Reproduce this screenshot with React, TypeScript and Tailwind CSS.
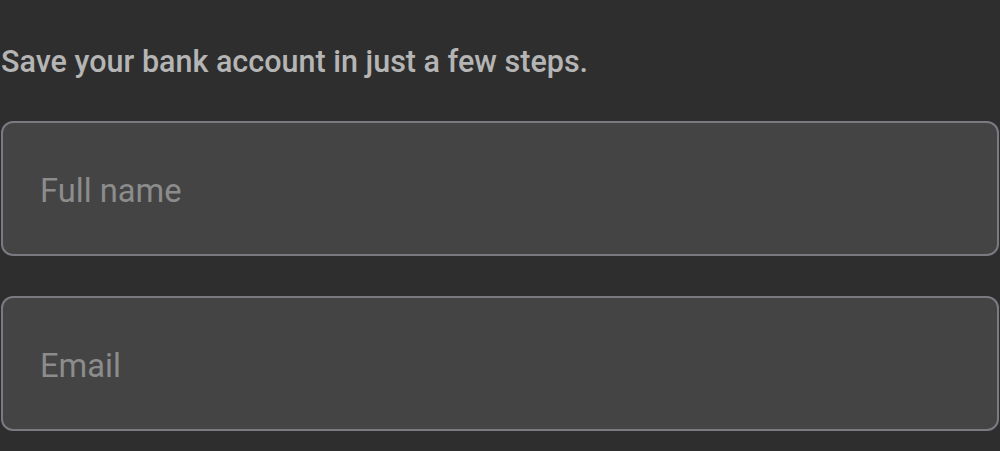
export default function App() {
  return (
    <div className="w-[1000px] h-[451px] overflow-hidden bg-[#2e2e2e] pl-px pr-px pt-[43px] font-['Roboto',sans-serif]">
      <p className="text-[30.5px] leading-[38px] font-medium text-[#b5b5b5]">
        Save your bank account in just a few steps.
      </p>

      <div className="mt-[40px] flex flex-col gap-[40px]">
        <Field placeholder="Full name" />
        <Field placeholder="Email" />
      </div>
    </div>
  );
}

function Field({ placeholder }: { placeholder: string }) {
  return (
    <input
      placeholder={placeholder}
      className="w-full h-[135px] rounded-[12px] border-2 border-[#7b7a83] bg-[#444444] px-[37px] pt-[4px] text-[32.7px] text-[#c0c0c0] placeholder:text-[#8c8c8c] outline-none"
    />
  );
}
